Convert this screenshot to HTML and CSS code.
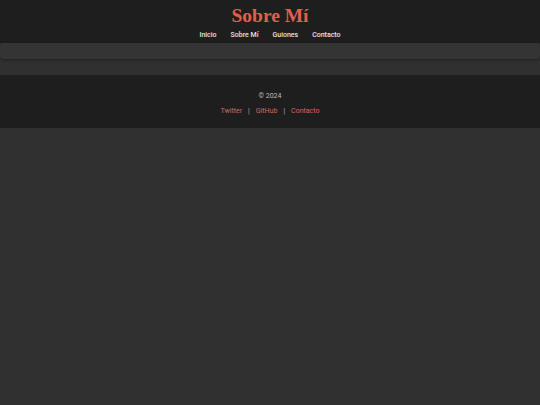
FILE: index.html
```html
<!DOCTYPE html>
<html lang="es">
<head>
<meta charset="utf-8">
<title>Sobre Mí</title>
<link rel="stylesheet" href="styles.css">
</head>
<body>
<header class="site-header">
  <h1 class="site-title">Sobre Mí</h1>
  <nav class="site-nav">
    <a href="#">Inicio</a>
    <a href="#">Sobre Mí</a>
    <a href="#">Guiones</a>
    <a href="#">Contacto</a>
  </nav>
</header>
<main class="content">
  <section class="card"></section>
</main>
<footer class="site-footer">
  <p class="copy">© 2024</p>
  <p class="links">
    <a href="#">Twitter</a><span class="sep">|</span><a href="#">GitHub</a><span class="sep">|</span><a href="#">Contacto</a>
  </p>
</footer>
</body>
</html>
```
FILE: styles.css
```css
html, body {
  margin: 0;
  padding: 0;
}
body {
  background: #303030;
  font-family: Roboto, "Liberation Sans", sans-serif;
  color: #dddddd;
}
.site-header {
  background: #1e1e1e;
  padding: 4px 0 3px;
  text-align: center;
}
.site-title {
  margin: 0;
  font-family: "Liberation Serif", "DejaVu Serif", serif;
  font-weight: 700;
  font-size: 19.5px;
  line-height: 24px;
  color: #e0604f;
}
.site-nav {
  display: flex;
  justify-content: center;
  gap: 14px;
  margin-top: 2px;
  line-height: 10px;
}
.site-nav a {
  color: #e4e4e4;
  text-decoration: none;
  font-size: 7px;
  font-weight: 500;
}
.content {
  padding: 0 0 16px;
}
.card {
  height: 16px;
  background: #343434;
  border-radius: 4px;
  box-shadow: 0 1px 3px rgba(0, 0, 0, 0.35);
}
.site-footer {
  background: #1e1e1e;
  padding: 16px 0 12px;
  text-align: center;
  font-size: 7px;
  line-height: 10px;
}
.site-footer p {
  margin: 0;
}
.copy {
  color: #bdbdbd;
}
.links {
  margin-top: 5px !important;
}
.links a {
  color: #d9665a;
  text-decoration: none;
}
.sep {
  color: #bdbdbd;
  margin: 0 6px;
}
```
